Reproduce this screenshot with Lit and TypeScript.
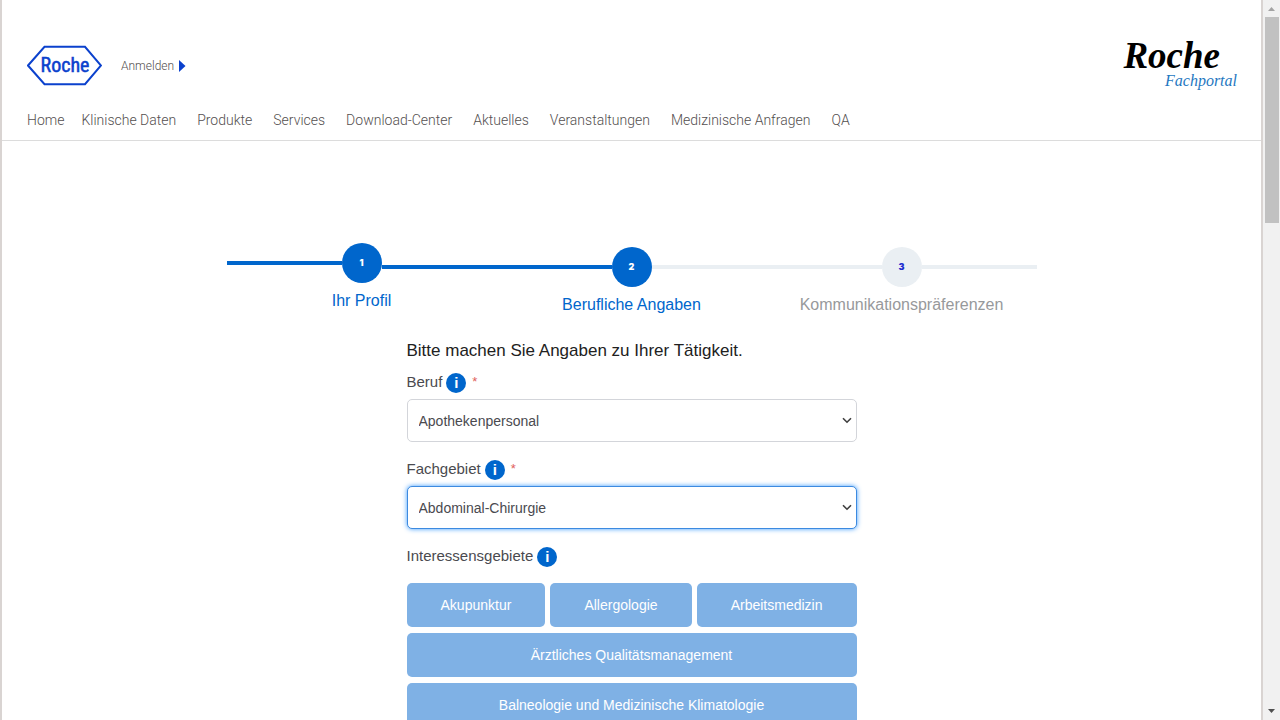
import { LitElement, html, css, svg } from "lit";
import { customElement, property } from "lit/decorators.js";
import { classMap } from "lit/directives/class-map.js";

@customElement("site-header")
class SiteHeader extends LitElement {
  static styles = css`
    :host {
      display: block;
      border-bottom: 1px solid #dcdcdc;
      padding: 40px 24px 0 25px;
      font-family: Roboto, "Liberation Sans", sans-serif;
      font-weight: 300;
      color: #544f4f;
    }
    .top {
      display: flex;
      justify-content: space-between;
      align-items: flex-start;
    }
    .account {
      display: flex;
      align-items: center;
      gap: 19px;
      padding-top: 5px;
    }
    .hexagon {
      display: block;
      width: 75px;
      height: 41px;
    }
    .hexagon text {
      font-family: "Liberation Sans Narrow", "Roboto Condensed", Roboto, sans-serif;
      font-size: 20px;
      font-weight: 400;
    }
    .login {
      display: flex;
      align-items: center;
      gap: 5px;
      font-size: 12px;
      color: inherit;
      text-decoration: none;
    }
    .caret {
      width: 7px;
      height: 12px;
    }
    .portal {
      display: flex;
      flex-direction: column;
      font-family: "Liberation Serif", serif;
      font-style: italic;
      color: #000;
      text-decoration: none;
    }
    .brand {
      font-size: 37px;
      font-weight: 700;
      line-height: 32px;
      padding-right: 17px;
    }
    .sub {
      font-size: 16px;
      font-weight: 400;
      line-height: 18px;
      color: #1f78c1;
      text-align: right;
    }
    .nav {
      display: flex;
      gap: 21px;
      padding: 20px 0 10px;
      font-size: 14px;
      line-height: 20px;
    }
    .nav a {
      color: inherit;
      text-decoration: none;
      white-space: nowrap;
    }
    .nav a:first-child {
      margin-right: -4px;
    }
  `;

  private items = [
    "Home", "Klinische Daten", "Produkte", "Services", "Download-Center",
    "Aktuelles", "Veranstaltungen", "Medizinische Anfragen", "QA",
  ];

  render() {
    return html`
      <div class="top">
        <div class="account">
          <a href="#" aria-label="Roche">
            <svg class="hexagon" viewBox="0 0 75 41">
              <path d="M1 20.5 17.5 1.8H58L74 20.5 58 39.2H17.5Z" fill="#fff" stroke="#0b41cd" stroke-width="2" />
              <text x="38" y="27" text-anchor="middle" fill="#0b41cd" stroke="#0b41cd" stroke-width="0.5">Roche</text>
            </svg>
          </a>
          <a class="login" href="#">Anmelden
            <svg class="caret" viewBox="0 0 7 12"><path d="M0 0 6.500 6 0 12Z" fill="#0b41cd" /></svg>
          </a>
        </div>
        <a class="portal" href="#"><span class="brand">Roche</span><span class="sub">Fachportal</span></a>
      </div>
      <nav class="nav">${this.items.map((t) => html`<a href="#">${t}</a>`)}</nav>
    `;
  }
}

@customElement("progress-steps")
class ProgressSteps extends LitElement {
  static styles = css`
    :host { display: block; }
    .steps {
      display: grid;
      grid-template-columns: repeat(3, 1fr);
      list-style: none;
      margin: 0;
      padding: 0;
    }
    .step {
      padding-top: 4px;
      color: #97999b;
      text-align: center;
      font-size: 16px;
      line-height: 20px;
    }
    .step.first { padding-top: 0; }
    .step.done { color: #0066cc; }
    .track {
      display: flex;
      align-items: center;
      margin-bottom: 8px;
    }
    .line {
      flex: 1;
      height: 4px;
      background: #eaeff3;
    }
    .line.on { background: #0066cc; }
    .step.first .line:last-child { margin-top: 8px; }
    .dot {
      width: 40px;
      height: 40px;
      border-radius: 50%;
      background: #eaeff3;
      color: #1f2fd0;
      font: 900 9px/40px Inter, "Open Sans", sans-serif;
    }
    .done .dot {
      background: #0066cc;
      color: #fff;
    }
  `;

  @property({ type: Number }) current = 2;

  private labels = ["Ihr Profil", "Berufliche Angaben", "Kommunikationspräferenzen"];

  render() {
    return html`<ol class="steps">
      ${this.labels.map((label, i) => {
        const n = i + 1;
        return html`<li class=${classMap({ step: true, first: i === 0, done: n <= this.current })}>
          <div class="track">
            <span class=${classMap({ line: true, on: n <= this.current })}></span>
            <span class="dot">${n}</span>
            <span class=${classMap({ line: true, on: n < this.current })}></span>
          </div>
          ${label}
        </li>`;
      })}
    </ol>`;
  }
}

@customElement("profession-form")
class ProfessionForm extends LitElement {
  static styles = css`
    :host { display: block; }
    .title {
      margin: 0 0 12px;
      font-size: 17px;
      line-height: 20px;
      font-weight: 400;
      color: #212121;
    }
    .label {
      display: flex;
      align-items: flex-start;
      height: 20px;
      margin-bottom: 6px;
      font-size: 15px;
      line-height: 18px;
      color: #4a4a4f;
    }
    .info {
      width: 20px;
      height: 20px;
      margin: 0 6px 0 4px;
      padding: 0;
      border: 0;
      border-radius: 50%;
      background: #0066cc;
      color: #fff;
      font: 700 15px/20px "Liberation Sans", Arial, sans-serif;
    }
    .required {
      font-size: 13px;
      color: #e0605a;
    }
    .control {
      position: relative;
      margin-bottom: 18px;
    }
    .select {
      display: block;
      box-sizing: border-box;
      width: 100%;
      height: 43px;
      padding: 0 30px 0 11px;
      appearance: none;
      border: 1px solid #d3d5da;
      border-radius: 5px;
      outline: 0;
      background: #fff;
      color: #4a4a4f;
      font: 14px "Liberation Sans", Arial, sans-serif;
    }
    .select.active {
      border-color: #3c8ae0;
      box-shadow: 0 0 5px #3b99fc;
    }
    .chevron {
      position: absolute;
      right: 5px;
      top: 18px;
      width: 10px;
      height: 7px;
      pointer-events: none;
    }
    .topics {
      display: flex;
      flex-wrap: wrap;
      gap: 6px 5px;
      padding-top: 10px;
    }
    .topic {
      flex: 1 1 auto;
      height: 44px;
      padding: 0 24px;
      border: 0;
      border-radius: 5px;
      background: #7fb1e5;
      color: #fff;
      font: 14px "Liberation Sans", Arial, sans-serif;
    }
  `;

  private topics = [
    "Akupunktur", "Allergologie", "Arbeitsmedizin",
    "Ärztliches Qualitätsmanagement", "Balneologie und Medizinische Klimatologie",
  ];

  private field(id: string, label: string, value: string, active: boolean) {
    return html`
      <div class="label">
        <label for=${id}>${label}</label>
        <button class="info" type="button">i</button>
        <span class="required">*</span>
      </div>
      <div class="control">
        <select id=${id} class=${classMap({ select: true, active })}>
          <option>${value}</option>
        </select>
        <svg class="chevron" viewBox="0 0 10 7">
          <path d="M1 1.200 5 5.200 9 1.200" fill="none" stroke="#3f3f3f" stroke-width="1.600" />
        </svg>
      </div>
    `;
  }

  render() {
    return html`
      <h1 class="title">Bitte machen Sie Angaben zu Ihrer Tätigkeit.</h1>
      ${this.field("beruf", "Beruf", "Apothekenpersonal", false)}
      ${this.field("fachgebiet", "Fachgebiet", "Abdominal-Chirurgie", true)}
      <div class="label">
        <span id="interests">Interessensgebiete</span>
        <button class="info" type="button">i</button>
      </div>
      <div class="topics" role="group" aria-labelledby="interests">
        ${this.topics.map((t) => html`<button class="topic" type="button">${t}</button>`)}
      </div>
    `;
  }
}

@customElement("app-root")
class AppRoot extends LitElement {
  static styles = css`
    :host {
      display: flex;
      height: 100vh;
      background: #fff;
      font-family: "Liberation Sans", Arial, sans-serif;
    }
    .page {
      flex: 1;
      min-width: 0;
      overflow-y: auto;
      scrollbar-width: none;
      border: solid #d9d4d2;
      border-width: 0 2px;
    }
    .content {
      display: flex;
      flex-direction: column;
      align-items: center;
      padding: 102px 20px 40px;
    }
    .progress {
      width: 100%;
      max-width: 810px;
      margin-bottom: 26px;
    }
    .form {
      width: 100%;
      max-width: 450px;
    }
    .rail {
      display: flex;
      flex-direction: column;
      width: 17px;
      background: #f1f1f1;
    }
    .arrow {
      display: block;
      width: 17px;
      height: 17px;
    }
    .run {
      flex: 1;
      padding: 0 1px 0 2px;
    }
    .thumb {
      height: 30%;
      background: #c1c1c1;
    }
  `;

  private arrow(d: string, fill: string) {
    return html`<svg class="arrow" viewBox="0 0 17 17">${svg`<path d=${d} fill=${fill} />`}</svg>`;
  }

  render() {
    return html`
      <div class="page">
        <site-header></site-header>
        <main class="content">
          <progress-steps class="progress" .current=${2}></progress-steps>
          <profession-form class="form"></profession-form>
        </main>
      </div>
      <div class="rail" aria-hidden="true">
        ${this.arrow("M5 11 8.500 7 12 11Z", "#a3a3a3")}
        <div class="run"><div class="thumb"></div></div>
        ${this.arrow("M5 6 8.500 10 12 6Z", "#505050")}
      </div>
    `;
  }
}
